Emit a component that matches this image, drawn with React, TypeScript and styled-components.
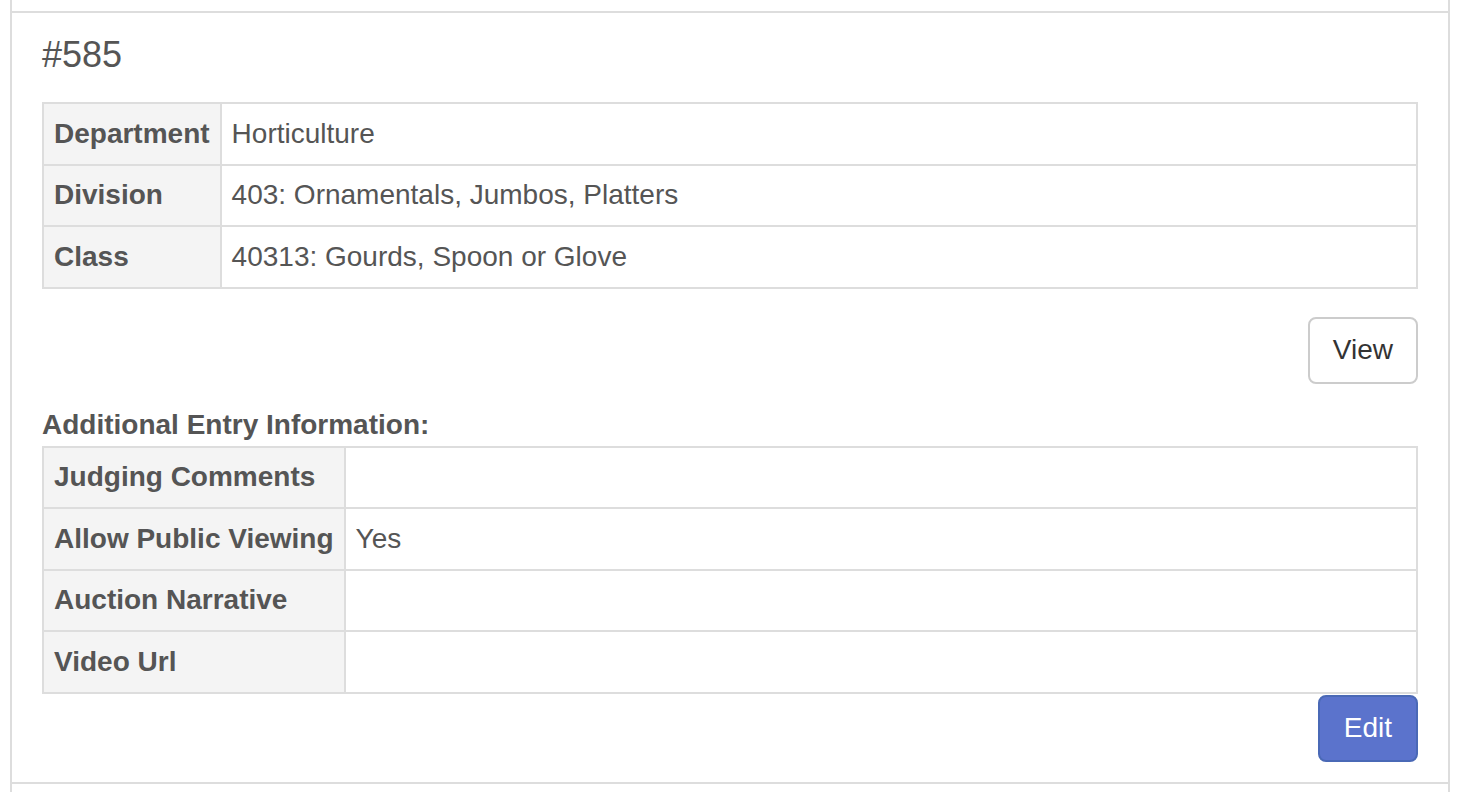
import React from "react";
import styled, { createGlobalStyle } from "styled-components";

const GlobalStyle = createGlobalStyle`
  html, body {
    margin: 0;
    padding: 0;
    background: #fff;
  }

  body {
    font-family: "Liberation Sans", Arial, Helvetica, sans-serif;
    font-size: 28px;
    line-height: 40px;
    color: #555;
    overflow: hidden;
  }
`;

interface IRow {
  label: string;
  value?: string;
}

const entryRows: IRow[] = [
  { label: "Department", value: "Horticulture" },
  { label: "Division", value: "403: Ornamentals, Jumbos, Platters" },
  { label: "Class", value: "40313: Gourds, Spoon or Glove" },
];

const additionalRows: IRow[] = [
  { label: "Judging Comments" },
  { label: "Allow Public Viewing", value: "Yes" },
  { label: "Auction Narrative" },
  { label: "Video Url" },
];

const InfoTable: React.FC<{ rows: IRow[] }> = ({ rows }) => {
  return (
    <Table>
      <tbody>
        {rows.map((row) => (
          <tr key={row.label}>
            <th>{row.label}</th>
            <td>{row.value}</td>
          </tr>
        ))}
      </tbody>
    </Table>
  );
};

export default function App() {
  return (
    <>
      <GlobalStyle />
      <List>
        <Stub $height={11} />
        <Item>
          <Heading>#585</Heading>
          <InfoTable rows={entryRows} />
          <ButtonRow $gap={28}>
            <Button $variant="default">View</Button>
          </ButtonRow>
          <SectionLabel>Additional Entry Information:</SectionLabel>
          <InfoTable rows={additionalRows} />
          <ButtonRow $gap={1}>
            <Button $variant="primary">Edit</Button>
          </ButtonRow>
        </Item>
        <Stub $height={20} />
      </List>
    </>
  );
}

const List = styled.div`
  margin: 0 10px;

  border-left: 2px solid #ddd;
  border-right: 2px solid #ddd;
`;

const Stub = styled.div<{ $height: number }>`
  height: ${({ $height }) => $height}px;
`;

const Item = styled.div`
  padding: 22px 30px 20px;

  border-top: 2px solid #ddd;
  border-bottom: 2px solid #ddd;
`;

const Heading = styled.h4`
  margin: 0 0 27px;

  font-size: 36px;
  font-weight: 500;
  line-height: 40px;
  color: #555;
`;

const Table = styled.table`
  width: 100%;

  border-collapse: collapse;
  border: 2px solid #ddd;

  th,
  td {
    padding: 9.75px 10px;

    border: 2px solid #ddd;

    text-align: left;
    vertical-align: top;
    line-height: 40px;
  }

  th {
    width: 1%;

    background: #f4f4f4;

    font-weight: 700;
    white-space: nowrap;
  }

  td {
    font-weight: 400;
  }
`;

const ButtonRow = styled.div<{ $gap: number }>`
  display: flex;
  justify-content: flex-end;

  margin-top: ${({ $gap }) => $gap}px;
`;

const Button = styled.button<{ $variant: "default" | "primary" }>`
  height: 67px;

  padding: 0 ${({ $variant }) => ($variant === "primary" ? 24 : 23)}px;

  border: 2px solid
    ${({ $variant }) => ($variant === "primary" ? "#4a69b6" : "#ccc")};
  border-radius: 8px;
  background: ${({ $variant }) =>
    $variant === "primary" ? "#5b73cc" : "#fff"};

  font-family: inherit;
  font-size: 28px;
  line-height: 40px;
  color: ${({ $variant }) => ($variant === "primary" ? "#fff" : "#333")};

  cursor: pointer;
`;

const SectionLabel = styled.label`
  display: block;

  margin: 21px 0 1px;

  font-weight: 700;
  line-height: 40px;
`;
